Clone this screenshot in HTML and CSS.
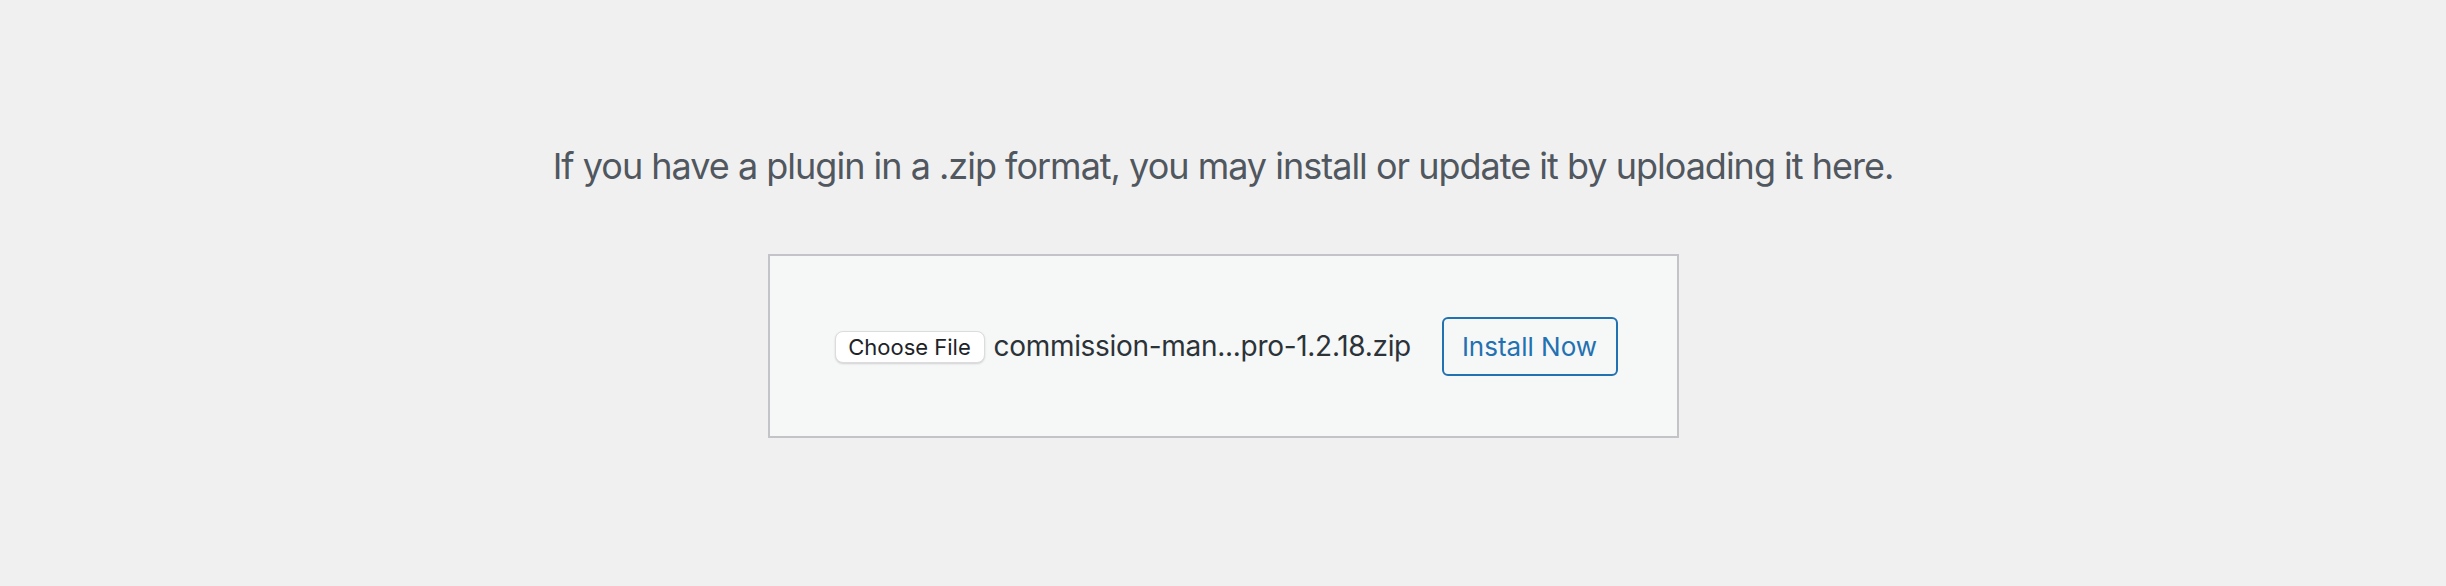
FILE: index.html
```html
<!DOCTYPE html>
<html lang="en">
<head>
  <meta charset="UTF-8">
  <title>Upload Plugin</title>
  <meta name="viewport" content="width=device-width, initial-scale=1">
  <link rel="stylesheet" href="styles.css">
</head>
<body>

  <div class="upload-plugin">
    <p class="install-help">If you have a plugin in a .zip format, you may install or update it by uploading it here.</p>

    <form class="upload-form" onsubmit="return false">
      <div class="file-field">
        <button type="button" class="choose-btn">Choose File</button>
        <span class="file-name">commission-man...pro-1.2.18.zip</span>
      </div>
      <button type="submit" class="install-btn">Install Now</button>
    </form>
  </div>

</body>
</html>
```

FILE: styles.css
```css
body {
  margin: 0;
  background: #f0f0f1;
  font-family: Inter, "Noto Sans", sans-serif;
}
.upload-plugin {
  display: flex;
  flex-direction: column;
  align-items: center;
}
.install-help {
  margin: 0;
  padding-top: 142px;
  color: #50575e;
  font-size: 36px;
  line-height: 48px;
  letter-spacing: -1px;
  text-align: center;
}
.upload-form {
  box-sizing: border-box;
  width: 911px;
  height: 184px;
  margin-top: 64px;
  padding: 0 59px 0 65px;
  background: #f6f7f7;
  border: 2px solid #c3c4c7;
  display: flex;
  align-items: center;
  justify-content: space-between;
}
.file-field {
  display: flex;
  align-items: center;
  gap: 9px;
}
.choose-btn {
  box-sizing: border-box;
  width: 150px;
  height: 32px;
  padding: 0;
  background: #fff;
  border: 1px solid #dcdcde;
  border-radius: 8px;
  box-shadow: 0 1px 2px rgba(0, 0, 0, 0.15);
  color: #1d2327;
  font-family: inherit;
  font-size: 22px;
  margin-top: 2px;
}
.file-name {
  color: #2c3338;
  font-size: 28px;
  letter-spacing: -0.3px;
}
.install-btn {
  box-sizing: border-box;
  width: 176px;
  height: 59px;
  background: #f6f7f7;
  border: 2px solid #2271b1;
  border-radius: 6px;
  color: #2271b1;
  font-family: inherit;
  font-size: 26px;
  cursor: pointer;
}
```
